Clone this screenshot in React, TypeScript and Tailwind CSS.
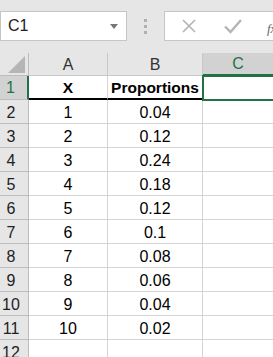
import React from "react";

const rows: [string, string][] = [
  ["1", "0.04"],
  ["2", "0.12"],
  ["3", "0.24"],
  ["4", "0.18"],
  ["5", "0.12"],
  ["6", "0.1"],
  ["7", "0.08"],
  ["8", "0.06"],
  ["9", "0.04"],
  ["10", "0.02"],
];

export default function App() {
  return (
    <div
      className="relative w-[273px] h-[357px] overflow-hidden bg-white text-black"
      style={{ fontFamily: '"Liberation Sans", Arial, sans-serif' }}
    >
      {/* Toolbar */}
      <div className="h-[53px] bg-[#e6e6e6] flex items-start pt-[11px]">
        <div className="w-[127px] h-[30px] shrink-0 bg-white border border-[#c6c6c6] flex items-center justify-between pl-[7px] pr-[8px]">
          <span className="text-[16px] text-[#222]">C1</span>
          <svg width="8" height="5" viewBox="0 0 8 5">
            <path d="M0 0 L8 0 L4 5 Z" fill="#777" />
          </svg>
        </div>
        <div className="w-[37px] h-[30px] shrink-0 flex flex-col items-center justify-center gap-[3px]">
          <div className="w-[3px] h-[3px] bg-[#b0b0b0]" />
          <div className="w-[3px] h-[3px] bg-[#b0b0b0]" />
          <div className="w-[3px] h-[3px] bg-[#b0b0b0]" />
        </div>
        <div className="flex-1 h-[30px] overflow-hidden bg-white border border-[#c6c6c6] border-r-0 flex items-center pl-[16px]">
          <svg className="shrink-0" width="16" height="16" viewBox="0 0 16 16">
            <path d="M2 2 L14 14 M14 2 L2 14" stroke="#b4b4b4" strokeWidth="1.6" fill="none" />
          </svg>
          <svg className="ml-[27px] shrink-0" width="18" height="16" viewBox="0 0 18 16">
            <path d="M1 8.5 L6.5 14 L17 2" stroke="#b4b4b4" strokeWidth="2.4" fill="none" />
          </svg>
          <span className="ml-[25px] mt-[6px] shrink-0 text-[13px] italic text-[#666]" style={{ fontFamily: '"Liberation Serif", serif' }}>
            fx
          </span>
        </div>
      </div>

      {/* Grid */}
      <div className="grid grid-cols-[29px_79px_95px_70px]">
        {/* Column headers */}
        <div className="h-[23px] bg-[#e6e6e6] border-r border-b border-[#bdbdbd] flex items-end justify-end pr-[3px] pb-[2px]">
          <svg width="17" height="17" viewBox="0 0 17 17">
            <path d="M17 0 L17 17 L0 17 Z" fill="#b5b5b5" />
          </svg>
        </div>
        <div className="h-[23px] bg-[#e6e6e6] border-r border-b border-[#c8c8c8] flex items-center justify-center pt-[1px] text-[16px] text-[#333]">
          A
        </div>
        <div className="h-[23px] bg-[#e6e6e6] border-r border-b border-[#c8c8c8] flex items-center justify-center pt-[1px] text-[16px] text-[#333]">
          B
        </div>
        <div className="h-[23px] bg-[#d2d2d2] border-b-2 border-[#217346] flex items-center justify-center pt-[1px] text-[16px] text-[#217346]">
          C
        </div>

        {/* Row 1 */}
        <div className="h-[24px] bg-[#d2d2d2] border-r-2 border-r-[#217346] border-b border-b-[#bdbdbd] flex items-center justify-center pr-[6px] pt-[1px] text-[16px] text-[#217346]">
          1
        </div>
        <div className="h-[24px] border-r border-r-[#d4d4d4] border-b-2 border-b-black flex items-center justify-center pt-[1px] font-bold text-[15.5px]">
          X
        </div>
        <div className="h-[24px] border-r border-r-[#d4d4d4] border-b-2 border-b-black flex items-center justify-center pt-[1px] font-bold text-[15.5px]">
          Proportions
        </div>
        <div className="h-[24px] border-b border-[#d4d4d4]" />

        {rows.map(([x, p], i) => (
          <React.Fragment key={i}>
            <div className="h-[24px] bg-[#e6e6e6] border-r border-b border-[#bdbdbd] flex items-center justify-center pr-[6px] pt-[2px] text-[16px] text-[#222]">
              {i + 2}
            </div>
            <div className="h-[24px] border-r border-b border-[#d4d4d4] flex items-center justify-center pt-[2px] text-[16px]">
              {x}
            </div>
            <div className="h-[24px] border-r border-b border-[#d4d4d4] flex items-center justify-center pt-[2px] text-[16px]">
              {p}
            </div>
            <div className="h-[24px] border-b border-[#d4d4d4]" />
          </React.Fragment>
        ))}

        <div className="h-[24px] bg-[#e6e6e6] border-r border-b border-[#bdbdbd] flex items-center justify-center pr-[6px] pt-[2px] text-[16px] text-[#222]">
          12
        </div>
        <div className="h-[24px] border-r border-b border-[#d4d4d4]" />
        <div className="h-[24px] border-r border-b border-[#d4d4d4]" />
        <div className="h-[24px] border-b border-[#d4d4d4]" />
      </div>

      {/* Selection box on C1 */}
      <div className="absolute left-[202px] top-[75px] w-[80px] h-[26px] border-2 border-[#217346]" />
    </div>
  );
}
